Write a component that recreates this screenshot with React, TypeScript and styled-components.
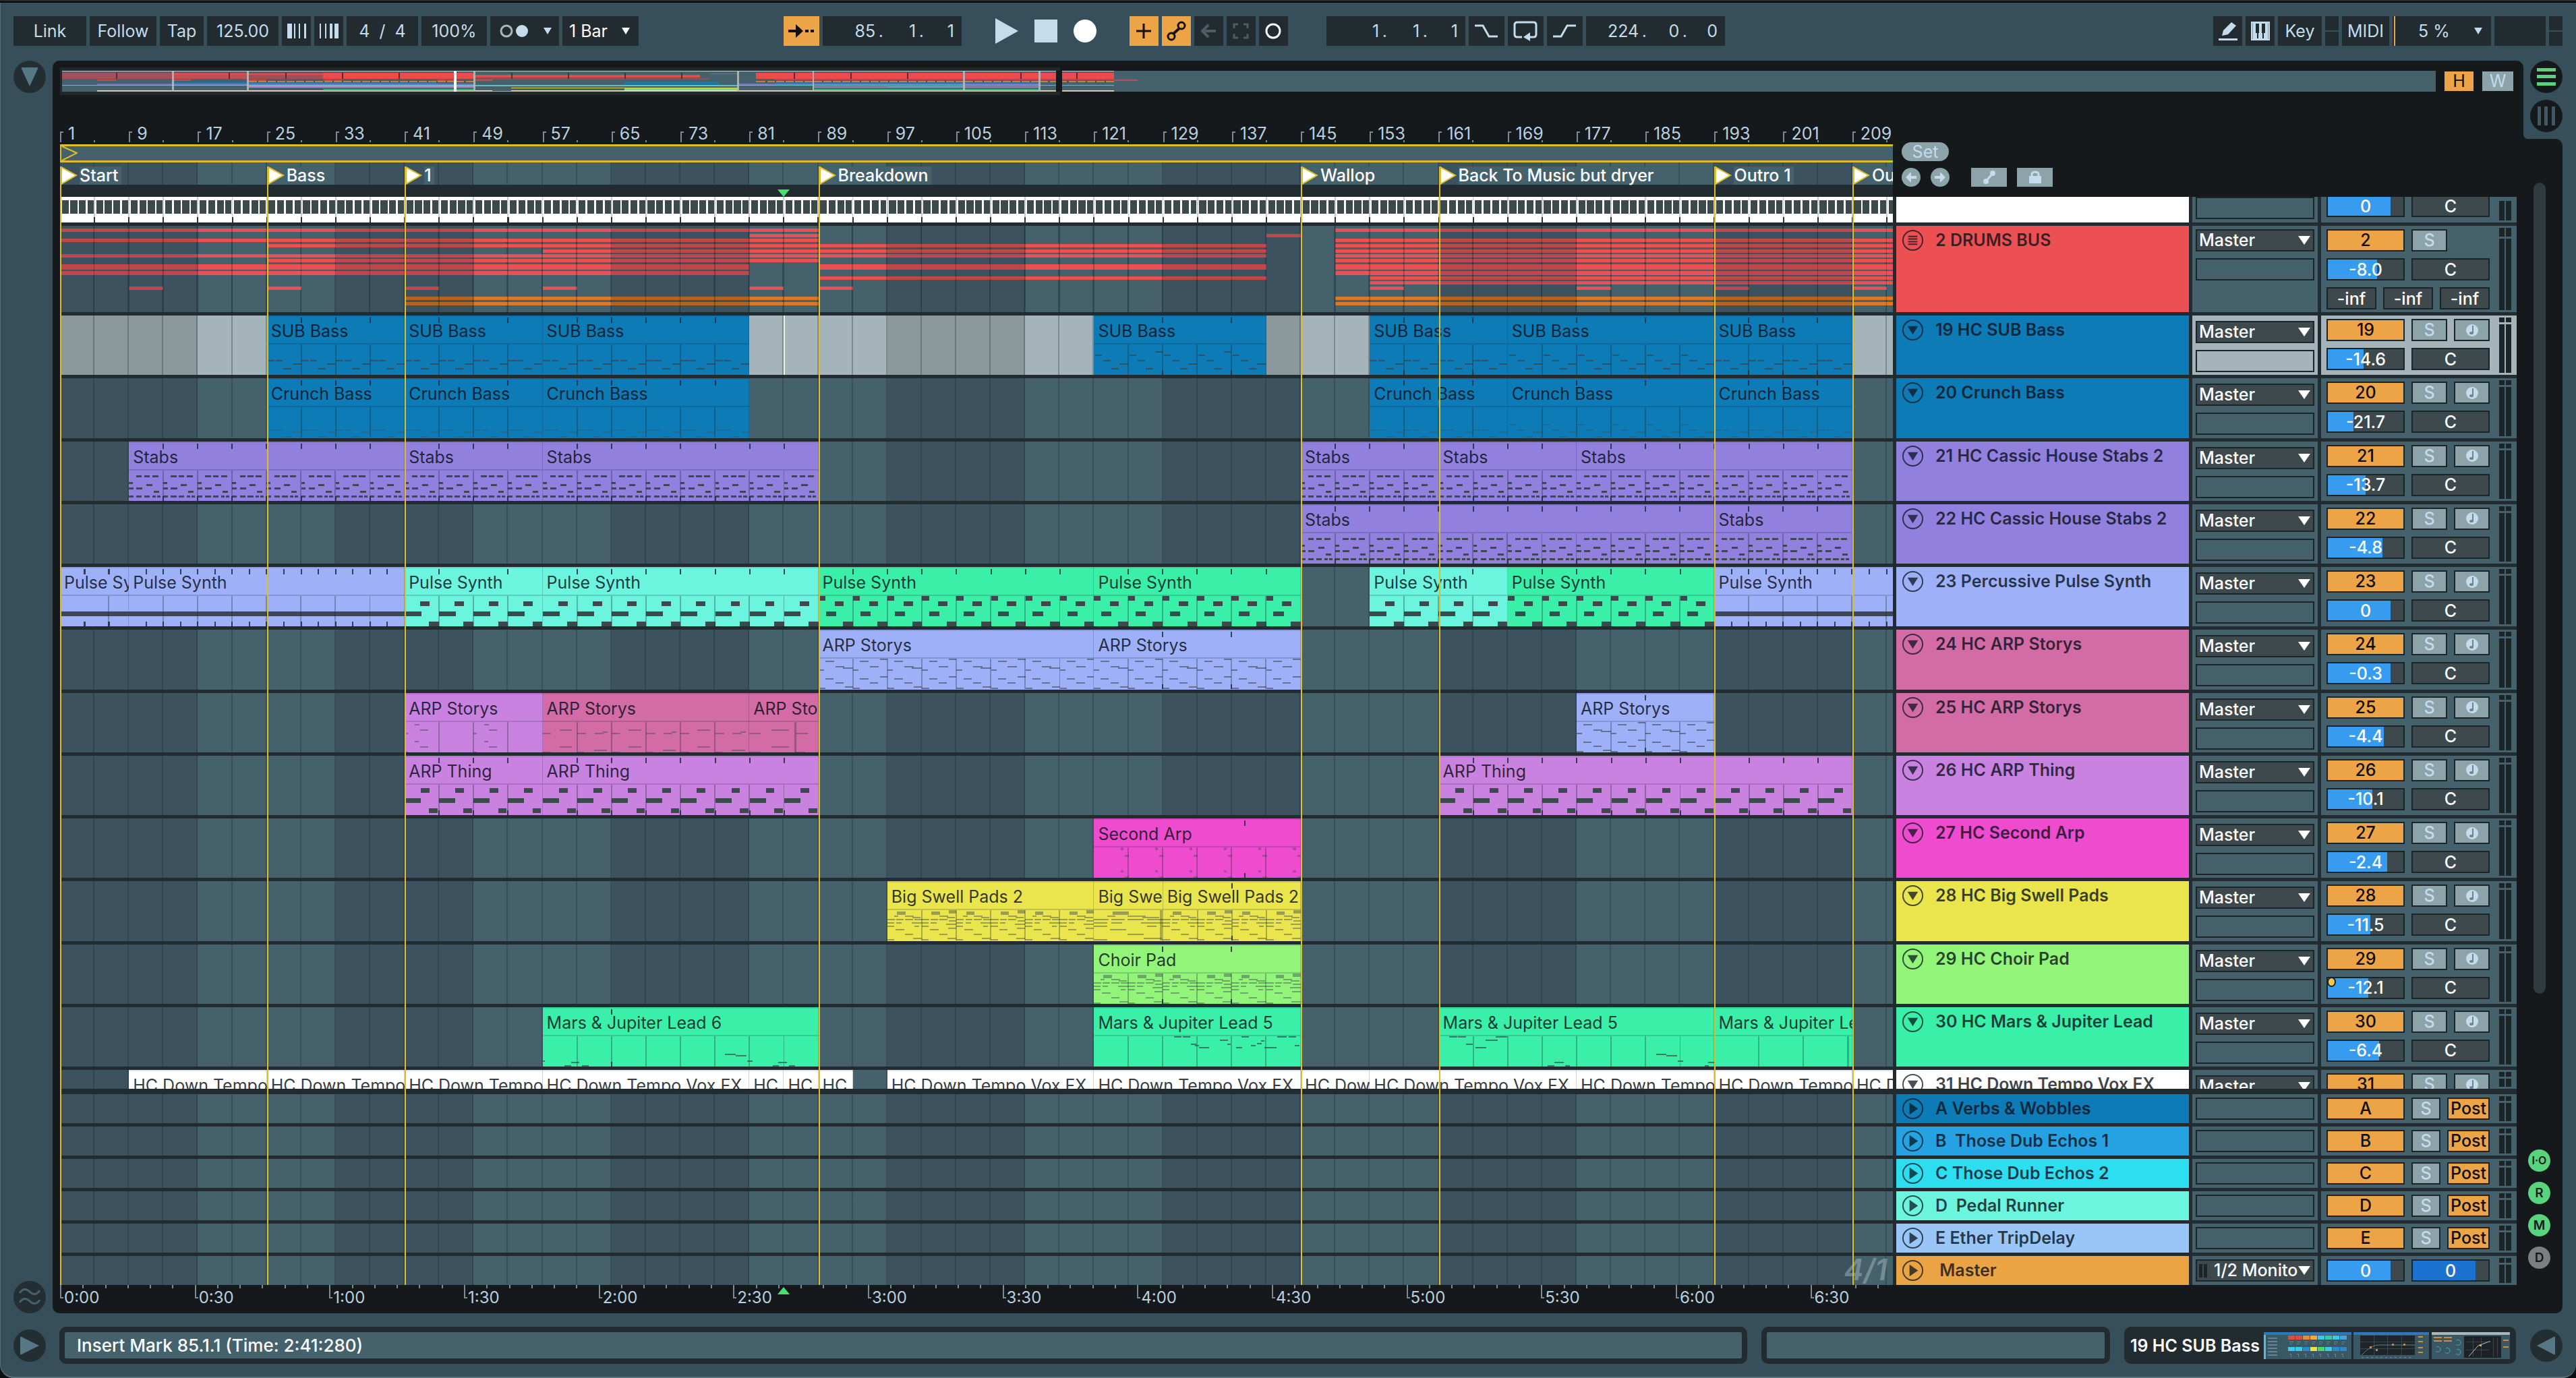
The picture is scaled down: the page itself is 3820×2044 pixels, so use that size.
import React from 'react';
import styled, { createGlobalStyle, css } from 'styled-components';

/* ------------------------------------------------------------------ */
/* Theme values                                                        */
/* ------------------------------------------------------------------ */

const c = {
  window: '#364f5b',
  field: '#222b2f',
  panel: '#15191b',
  divider: '#222b2f',
  surface: '#44616c',
  surfaceDark: '#3c535f',
  selected: '#a5b4bb',
  selectedDark: '#8b999d',
  text: '#c4dcec',
  white: '#ffffff',
  orange: '#eda447',
  blue: '#379cef',
  off: '#8ba3a9',
  control: '#3d494c',
  edge: '#1b2426',
  yellow: '#dcbd2e',
  note: '#3c4a4e',
  green: '#4ade72',
};

const hue = {
  blue: '#0d7bb6',
  purple: '#9280de',
  peri: '#9eb0f8',
  aqua: '#6bf5df',
  green: '#3af0a9',
  pink: '#d36ba6',
  violet: '#ca82e0',
  magenta: '#ee4bcf',
  yellow: '#eae44d',
  lime: '#92f57a',
  red: '#ec5052',
  white: '#ffffff',
};

const TOTAL = 212.7;
const pct = (bars: number) => `${(bars / TOTAL) * 100}%`;

const Global = createGlobalStyle`
  * { box-sizing: border-box; }
  body { margin: 0; background: #0d0f10; font-family: Inter, "Liberation Sans", sans-serif; font-size: 25px; }
  button, input, select { font: inherit; color: inherit; margin: 0; padding: 0; border: 0; border-radius: 0; outline: 0; background: none; min-width: 0; }
  button { cursor: pointer; }
`;

/* ------------------------------------------------------------------ */
/* Shell                                                               */
/* ------------------------------------------------------------------ */

const Window = styled.div`
  display: flex;
  flex-direction: column;
  height: 100vh;
  background: ${c.window};
  border-top: 2px solid #28292e;
  border-bottom: 2px solid #5c7079;
  border-radius: 0 0 20px 20px;
  box-shadow: inset 0 2px 0 #05070a, inset 1px 0 0 #566b75;
  overflow: hidden;
  color: ${c.text};
`;

const Toolbar = styled.header`
  display: flex;
  align-items: center;
  padding: 22px 20px;
`;

const Group = styled.div<{ $gap?: number; $before?: number; $grow?: boolean }>`
  display: flex;
  align-items: center;
  flex: ${p => (p.$grow ? '1' : 'none')};
  gap: ${p => p.$gap ?? 5}px;
  margin-left: ${p => p.$before ?? 0}px;
`;

const Spacer = styled.div<{ $grow: number }>`
  flex: ${p => p.$grow} 1 0;
`;

const ToolButton = styled.button<{ $w: number; $on?: boolean }>`
  display: flex;
  align-items: center;
  justify-content: center;
  width: ${p => p.$w}px;
  height: 44px;
  background: ${p => (p.$on ? c.orange : c.field)};
  color: ${p => (p.$on ? '#14110c' : c.text)};
`;

const ToolInput = styled.input<{ $w: number }>`
  width: ${p => p.$w}px;
  height: 44px;
  background: ${c.field};
  text-align: center;
`;

const PickWrap = styled.div<{ $w: number; $meter?: boolean }>`
  display: grid;
  align-items: center;
  width: ${p => p.$w}px;
  height: 44px;
  background: ${c.field};
  ${p => p.$meter && `box-shadow: inset 2px 0 0 ${c.field}, inset 4px 0 0 ${c.orange};`}
  > * { grid-area: 1 / 1; }
  > svg { justify-self: end; margin-right: 13px; pointer-events: none; }
`;

const PickSelect = styled.select<{ $pad: number; $white?: boolean }>`
  appearance: none;
  width: 100%;
  height: 44px;
  padding-left: ${p => p.$pad}px;
  color: ${p => (p.$white ? c.white : c.text)};
`;

const Position = styled.div`
  display: flex;
  justify-content: flex-end;
  width: 206px;
  height: 44px;
  padding-right: 11px;
  background: ${c.field};
`;

const PositionInput = styled.input<{ $last?: boolean }>`
  width: ${p => (p.$last ? 45 : 60)}px;
  text-align: right;
`;

const Transport = styled.button`
  display: flex;
  width: 34px;
  height: 44px;
  align-items: center;
  justify-content: center;
`;

const Leds = styled.div`
  display: grid;
  grid-template-rows: 21px 21px;
  gap: 2px;
  width: 20px;
  > span { background: ${c.field}; }
`;

const Body = styled.main`
  display: flex;
  flex: 1;
  min-height: 0;
  padding-right: 20px;
`;

const SideRail = styled.aside`
  display: flex;
  flex-direction: column;
  justify-content: space-between;
  width: 78px;
  padding-left: 20px;
`;

const Round = styled.button<{ $bg?: string }>`
  display: flex;
  flex: none;
  align-items: center;
  justify-content: center;
  width: 48px;
  height: 48px;
  border-radius: 50%;
  background: ${p => p.$bg ?? '#232e33'};
`;

const Panel = styled.section`
  display: flex;
  flex-direction: column;
  flex: 1;
  min-width: 0;
  padding: 10px 10px 0 11px;
  background: ${c.panel};
  border-radius: 10px 10px 0 10px;
`;

/* ------------------------------------------------------------------ */
/* Overview                                                            */
/* ------------------------------------------------------------------ */

const OverviewRow = styled.div`
  display: flex;
  align-items: center;
  height: 41px;
  padding-right: 5px;
`;

const OverviewFrame = styled.div`
  flex: 1;
  height: 41px;
  min-width: 0;
  padding: 5px 0 5px 3px;
  background: linear-gradient(90deg, #22292b 42.1%, transparent 42.1%);
  > svg { display: block; width: 100%; height: 31px; background: ${c.surface}; }
`;

const SizeButton = styled.button<{ $on?: boolean }>`
  width: ${p => (p.$on ? 43 : 46)}px;
  height: 29px;
  margin-left: 13px;
  background: ${p => (p.$on ? c.orange : c.off)};
  color: ${p => (p.$on ? '#14110c' : c.text)};
  line-height: 29px;
`;

/* ------------------------------------------------------------------ */
/* Arrangement grid                                                    */
/* ------------------------------------------------------------------ */

const columns = css`
  display: grid;
  grid-template-columns: minmax(0, 1fr) 434px 186px 290px;
  column-gap: 5px;
`;

const Arrangement = styled.div`
  ${columns}
  flex: 1;
  min-height: 0;
  grid-template-rows: 151px minmax(0, 1fr) 283px 42px;
`;

const Rulers = styled.div`
  grid-area: 1 / 1;
  display: flex;
  flex-direction: column;
  overflow: hidden;
  background: ${c.panel};
`;

const BarRuler = styled.div`
  display: flex;
  height: 73px;
`;

const BarCell = styled.div`
  display: flex;
  flex: none;
  align-items: flex-end;
  width: ${pct(8)};
  padding-left: 12px;
  line-height: 32px;
  color: #b9d0e0;
  background:
    linear-gradient(#7d8a90, #7d8a90) 0 calc(100% - 3px) / 2px 16px no-repeat,
    linear-gradient(#7d8a90, #7d8a90) 0 calc(100% - 17px) / 5px 2px no-repeat,
    linear-gradient(#7d8a90, #7d8a90) 50% calc(100% - 3px) / 2px 3px no-repeat;
`;

const LoopBar = styled.div`
  display: flex;
  height: 27px;
  background: ${c.surface};
  border: solid ${c.yellow};
  border-width: 3px 0 3px 2px;
`;

const bands = (dark: string, light: string) => css`
  background:
    repeating-linear-gradient(90deg, transparent 0 calc(${pct(4)} - 2px), rgba(20, 34, 42, 0.28) calc(${pct(4)} - 2px) ${pct(4)}),
    repeating-linear-gradient(90deg, ${dark} 0 ${pct(16)}, ${light} ${pct(16)} ${pct(32)});
`;

const MarkerStrip = styled.div`
  height: 33px;
  ${bands(c.surfaceDark, c.surface)}
`;

const ScrubStrip = styled.div`
  flex: 1;
  background: ${c.divider};
`;

const Overlay = styled.div<{ $rows: string }>`
  grid-column: 1;
  grid-row: ${p => p.$rows};
  position: relative;
  overflow: hidden;
  z-index: 2;
  pointer-events: none;
`;

const Locator = styled.div`
  position: absolute;
  top: 106px;
  bottom: 0;
  display: flex;
  align-items: flex-start;
  border-left: 2px solid ${c.yellow};
`;

const LocatorName = styled.span`
  margin-left: 3px;
  padding-right: 4px;
  font-weight: 500;
  line-height: 27px;
  white-space: nowrap;
  color: ${c.white};
  background: ${c.surface};
`;

const PlayMark = styled.svg<{ $top: number }>`
  position: absolute;
  top: ${p => p.$top}px;
  width: 18px;
  height: 11px;
  margin-left: -9px;
`;

const HeadControls = styled.div`
  grid-area: 1 / 2 / 2 / 5;
  display: flex;
  flex-direction: column;
  gap: 10px;
  padding: 70px 0 0 8px;
`;

const SetButton = styled.button`
  width: 70px;
  height: 28px;
  border-radius: 14px;
  background: ${c.off};
  line-height: 28px;
`;

const Dot = styled.button`
  display: flex;
  align-items: center;
  justify-content: center;
  width: 28px;
  height: 28px;
  border-radius: 50%;
  background: ${c.off};
`;

const Chip = styled.button`
  display: flex;
  align-items: center;
  justify-content: center;
  width: 53px;
  height: 28px;
  background: ${c.off};
`;

const Scroller = styled.div`
  grid-area: 2 / 1 / 3 / 5;
  display: grid;
  grid-template-rows: 38px 128px repeat(12, minmax(0, 1fr)) 28px;
  row-gap: 5px;
  min-height: 0;
  overflow: hidden;
  background: ${c.divider};
  border-bottom: 8px solid ${c.divider};
`;

const Returns = styled.div`
  grid-area: 3 / 1 / 4 / 5;
  display: grid;
  grid-template-rows: repeat(6, minmax(0, 1fr));
  row-gap: 5px;
  background: ${c.divider};
`;

const Row = styled.div`
  ${columns}
  min-height: 0;
  overflow: hidden;
`;

const Lane = styled.div<{ $selected?: boolean }>`
  position: relative;
  overflow: hidden;
  ${p => (p.$selected ? bands(c.selectedDark, c.selected) : bands(c.surfaceDark, c.surface))}
`;

const LaneDrawing = styled.svg`
  display: block;
  width: 100%;
  height: 100%;
`;

const ClipBox = styled.div<{ $color: string; $short?: boolean }>`
  position: absolute;
  top: 0;
  height: ${p => (p.$short ? '88px' : '100%')};
  overflow: hidden;
  display: grid;
  background: ${p => p.$color};
  box-shadow: inset -1px 0 0 rgba(20, 30, 50, 0.2), inset 0 2px 0 rgba(20, 30, 50, 0.12);
  > * { grid-area: 1 / 1; }
  > svg { width: 100%; height: 100%; }
`;

const ClipName = styled.span`
  align-self: start;
  padding: 7px 0 0 6px;
  line-height: 32px;
  white-space: nowrap;
  color: rgba(10, 16, 24, 0.84);
`;

const Cursor = styled.i`
  position: absolute;
  top: 0;
  bottom: 0;
  width: 2px;
  background: #e2f8e4;
`;

const Signature = styled.span`
  position: absolute;
  right: 8px;
  bottom: -2px;
  font-size: 44px;
  font-style: italic;
  font-weight: 600;
  line-height: 50px;
  color: rgba(190, 205, 212, 0.42);
`;

const TimeRuler = styled.div`
  grid-area: 4 / 1;
  display: flex;
  overflow: hidden;
  background: repeating-linear-gradient(90deg, #7d8a90 0 2px, transparent 2px ${pct(15.625 / 6)}) 0 0 / 100% 5px no-repeat;
`;

const TimeCell = styled.div`
  flex: none;
  width: ${pct(15.625)};
  padding-left: 6px;
  font-size: 24px;
  line-height: 38px;
  color: #b9d0e0;
  background:
    linear-gradient(#7d8a90, #7d8a90) 0 0 / 2px 20px no-repeat,
    linear-gradient(#7d8a90, #7d8a90) 0 18px / 5px 2px no-repeat;
`;

/* ------------------------------------------------------------------ */
/* Track header, routing and mixer cells                               */
/* ------------------------------------------------------------------ */

const Header = styled.div<{ $color: string }>`
  display: flex;
  align-items: flex-start;
  gap: 17px;
  padding: 5px 0 0 8px;
  overflow: hidden;
  background: ${p => p.$color};
`;

const Fold = styled.button`
  display: flex;
  flex: none;
  width: 33px;
  height: 33px;
  color: rgba(10, 22, 32, 0.75);
  > svg { width: 33px; height: 33px; }
`;

const TrackName = styled.span`
  font-weight: 600;
  line-height: 32px;
  white-space: pre;
  color: rgba(8, 16, 24, 0.78);
`;

const cell = css<{ $selected?: boolean }>`
  overflow: hidden;
  background: ${p => (p.$selected ? c.selected : c.surface)};
`;

type Kind = 'track' | 'group' | 'cut' | 'return';

const Routing = styled.div<{ $selected?: boolean; $kind: Kind }>`
  ${cell}
  display: flex;
  flex-direction: column;
  justify-content: ${p => (p.$kind === 'cut' ? 'flex-end' : 'flex-start')};
  gap: 10px;
  padding: ${p => (p.$kind === 'track' ? 8 : 5)}px 5px 5px;
`;

const SelectBox = styled.div<{ $blank?: boolean }>`
  display: grid;
  flex: none;
  align-items: center;
  height: 33px;
  border: 2px solid ${c.edge};
  background: ${p => (p.$blank ? 'transparent' : c.control)};
  > * { grid-area: 1 / 1; }
  > svg { justify-self: end; margin-right: 4px; pointer-events: none; }
`;

const InputMeter = styled.span`
  display: grid;
  grid-template-columns: 5px 5px;
  gap: 2px;
  height: 20px;
  margin-left: 3px;
  > i { background: ${c.edge}; }
`;

const RouteSelect = styled.select<{ $inset?: boolean }>`
  appearance: none;
  width: ${p => (p.$inset ? 150 : 172)}px;
  height: 29px;
  padding-left: ${p => (p.$inset ? 25 : 3)}px;
  font-weight: 500;
  line-height: 29px;
  color: ${c.white};
`;

const Mixer = styled.div<{ $selected?: boolean }>`
  ${cell}
  display: flex;
  gap: 14px;
  padding-left: 8px;
`;

const Controls = styled.div<{ $kind: Kind }>`
  display: flex;
  flex-direction: column;
  justify-content: ${p => (p.$kind === 'cut' ? 'flex-end' : 'flex-start')};
  gap: 10px;
  width: 242px;
  padding: 5px 0 ${p => (p.$kind === 'cut' ? 8 : 5)}px;
`;

const ControlRow = styled.div`
  display: flex;
  flex: none;
  gap: 10px;
  position: relative;
`;

const boxed = css`
  height: 33px;
  border: 2px solid ${c.edge};
  font-weight: 500;
  line-height: 29px;
  text-align: center;
`;

const Activator = styled.button`
  ${boxed}
  width: 116px;
  background: ${c.orange};
  color: #0f0d0a;
`;

const Toggle = styled.button<{ $w: number; $post?: boolean }>`
  ${boxed}
  display: flex;
  align-items: center;
  justify-content: center;
  overflow: hidden;
  width: ${p => p.$w}px;
  background: ${p => (p.$post ? c.orange : c.off)};
  color: ${p => (p.$post ? '#0f0d0a' : c.text)};
`;

const Level = styled.input<{ $fill: number; $deep?: boolean }>`
  ${boxed}
  width: 116px;
  color: ${c.white};
  background: linear-gradient(90deg, ${p => (p.$deep ? '#1b72cf' : c.blue)} ${p => p.$fill}%, ${c.control} ${p => p.$fill}%);
`;

const Pan = styled.input`
  ${boxed}
  width: 116px;
  color: ${c.white};
  background: ${c.control};
`;

const SendInput = styled.input`
  ${boxed}
  width: 74px;
  color: ${c.white};
  background: ${c.control};
`;

const AutomationDot = styled.i`
  position: absolute;
  left: 1px;
  top: 0;
  width: 13px;
  height: 15px;
  border-radius: 50%;
  border: 2px solid ${c.edge};
  background: #f2c744;
`;

const Meter = styled.div<{ $peak: number }>`
  display: grid;
  grid-template-columns: 8px 8px;
  grid-template-rows: ${p => p.$peak}px minmax(0, 1fr);
  gap: 3px 2px;
  padding: 3px 0;
  > i { background: ${c.edge}; }
`;

/* ------------------------------------------------------------------ */
/* Right rail                                                          */
/* ------------------------------------------------------------------ */

const RightRail = styled.aside`
  display: flex;
  flex-direction: column;
  width: 58px;
`;

const ViewSwitch = styled.div`
  display: flex;
  flex-direction: column;
  gap: 10px;
  height: 116px;
  padding-left: 10px;
  background: radial-gradient(circle at 8px 0, transparent 8px, ${c.panel} 9px) 0 100% / 8px 8px no-repeat;
`;

const RailLower = styled.div`
  display: flex;
  flex-direction: column;
  flex: 1;
  gap: 15px;
  padding: 65px 0 66px 7px;
  background: ${c.panel};
  border-radius: 0 10px 10px 0;
`;

const ScrollTrack = styled.div`
  flex: 1;
  padding: 0 0 216px 8px;
  &::before {
    content: '';
    display: block;
    width: 18px;
    height: 100%;
    border-radius: 9px;
    background: #2f3b3f;
  }
`;

const Badge = styled.button<{ $off?: boolean; $small?: boolean }>`
  width: 33px;
  height: 33px;
  border-radius: 50%;
  background: ${p => (p.$off ? '#7b7f81' : '#58d47c')};
  color: #121a1a;
  font-size: ${p => (p.$small ? 16 : 19)}px;
  font-weight: 600;
  line-height: 33px;
`;

/* ------------------------------------------------------------------ */
/* Status bar                                                          */
/* ------------------------------------------------------------------ */

const StatusBar = styled.footer`
  display: flex;
  align-items: center;
  gap: 21px;
  padding: 20px 20px 19px;
`;

const StatusField = styled.div<{ $w?: number }>`
  display: flex;
  align-items: center;
  ${p => (p.$w ? `width: ${p.$w}px;` : 'flex: 1;')}
  min-width: 0;
  height: 55px;
  padding-left: 18px;
  border: 8px solid ${c.field};
  border-radius: 10px;
  background: ${c.surface};
  font-size: 26px;
  font-weight: 500;
  color: ${c.white};
`;

const DeviceField = styled.div`
  display: flex;
  align-items: center;
  justify-content: space-between;
  width: 581px;
  height: 55px;
  padding: 0 9px;
  border-radius: 10px;
  background: ${c.field};
  font-weight: 600;
  color: ${c.white};
`;

/* ------------------------------------------------------------------ */
/* Icons                                                               */
/* ------------------------------------------------------------------ */

const Arrow = ({ w = 18, h = 12, fill = c.text }) => (
  <svg width={w} height={h} viewBox="0 0 18 12" preserveAspectRatio="none"><path d="M0 0H18L9 12Z" fill={fill} /></svg>
);

const FoldIcon = ({ kind }: { kind: 'down' | 'right' | 'group' }) => (
  <svg viewBox="0 0 34 34" fill="none" stroke="currentColor" strokeWidth="2">
    <circle cx="17" cy="17" r="15" />
    {kind === 'down' && <path d="M9 11H25L17 24Z" fill="currentColor" stroke="none" />}
    {kind === 'right' && <path d="M12 8V26L25 17Z" fill="currentColor" stroke="none" />}
    {kind === 'group' && <path d="M10 11H24M10 15H24M10 19H24M10 23H24" />}
  </svg>
);

const NoteIcon = () => (
  <svg width="20" height="20" viewBox="0 0 20 20">
    <circle cx="10" cy="10" r="9" fill={c.text} />
    <path d="M11 3V14" stroke="#6d8790" strokeWidth="2" />
    <ellipse cx="9" cy="14" rx="3" ry="2" fill="#6d8790" />
  </svg>
);

/* ------------------------------------------------------------------ */
/* Clip note patterns: [x, y, w, h] with x/w as a part of a 4-bar cell */
/* ------------------------------------------------------------------ */

type N = [number, number, number, number];
interface Pattern { even: N[]; odd?: N[]; opacity: number }

const patterns: Record<string, Pattern> = {
  bassA: { opacity: 0.85, even: [[0, 66, 0.22, 2], [0.25, 66, 0.2, 2], [0.75, 71, 0.25, 2], [0.47, 78, 0.23, 2]] },
  bassB: {
    opacity: 0.85,
    even: [[0.03, 58, 0.2, 2], [0.27, 66, 0.22, 2], [0.74, 71, 0.26, 2], [0.5, 78, 0.22, 2]],
  },
  bassC: {
    opacity: 0.85,
    even: [[0.03, 58, 0.2, 2], [0.27, 66, 0.22, 2], [0.74, 71, 0.26, 2], [0.5, 78, 0.22, 2]],
    odd: [[0.03, 58, 0.2, 2], [0.27, 66, 0.22, 2], [0.78, 53, 0.22, 2], [0.5, 78, 0.22, 2]],
  },
  crunchA: { opacity: 0.3, even: [[0, 76, 0.22, 2], [0.25, 76, 0.2, 2], [0.75, 79, 0.25, 2], [0.47, 86, 0.23, 2]] },
  crunchB: { opacity: 0.35, even: [[0.03, 68, 0.2, 2], [0.27, 76, 0.22, 2], [0.74, 79, 0.26, 2], [0.5, 86, 0.22, 2]] },
  stabs: {
    opacity: 1,
    even: [
      [0.22, 50, 0.16, 3], [0.45, 50, 0.16, 3], [0.68, 50, 0.18, 3],
      [0, 60, 0.11, 3], [0.5, 63, 0.18, 3],
      [0, 68, 0.13, 3], [0.22, 68, 0.18, 3],
      [0.72, 73, 0.16, 3],
      [0, 80, 0.13, 3], [0.22, 80, 0.16, 3], [0.45, 80, 0.16, 3], [0.68, 80, 0.1, 3], [0.82, 80, 0.1, 3],
    ],
  },
  pulse: { opacity: 1, even: [[0.45, 51, 0.27, 7], [0, 66, 0.48, 7], [0.71, 81, 0.29, 8]] },
  pulseHigh: { opacity: 1, even: [[0, 43, 0.2, 7], [0.46, 51, 0.27, 7], [0.21, 66, 0.3, 7], [0.71, 81, 0.29, 8]] },
  drone: { opacity: 1, even: [[0, 66, 1, 7]] },
  thing: { opacity: 1, even: [[0.47, 48, 0.25, 7], [0, 63, 0.47, 7], [0.71, 78, 0.25, 7]] },
  story: {
    opacity: 0.6,
    even: [
      [0.2, 46, 0.25, 2], [0.48, 54, 0.27, 2], [0.7, 56, 0.3, 2], [0, 59, 0.16, 2],
      [0.2, 72, 0.24, 2], [0.48, 78, 0.24, 2], [0.76, 84, 0.24, 2], [0, 86, 0.2, 2],
    ],
    odd: [
      [0.2, 46, 0.25, 2], [0.48, 54, 0.27, 2], [0.78, 43, 0.22, 2], [0, 59, 0.16, 2],
      [0.2, 72, 0.24, 2], [0.48, 78, 0.24, 2], [0.78, 69, 0.22, 2], [0, 86, 0.2, 2],
    ],
  },
  storyViolet: {
    opacity: 0.5,
    even: [[0.3, 46, 0.14, 2], [0.45, 54, 0.24, 2], [0, 59, 0.1, 2], [0.3, 71, 0.12, 2], [0.45, 79, 0.24, 2], [0, 87, 0.1, 2]],
    odd: [],
  },
  storyPink: {
    opacity: 0.45,
    even: [[0.48, 54, 0.37, 2], [0, 59, 0.24, 2], [0.48, 79, 0.37, 2], [0, 87, 0.24, 2]],
    odd: [[0, 59, 0.26, 2], [0.5, 59, 0.26, 2], [0.74, 57, 0.14, 2], [0.48, 84, 0.38, 2], [0, 87, 0.2, 2]],
  },
  second: { opacity: 0.4, even: [[0.78, 43, 0.08, 4], [0.9, 54, 0.12, 3], [0.78, 77, 0.08, 3], [0.9, 86, 0.12, 3]] },
  swell: {
    opacity: 0.45,
    even: [
      [0.28, 45, 0.24, 5], [0.2, 51, 0.12, 2], [0.5, 51, 0.26, 2], [0.72, 53, 0.24, 2],
      [0, 56, 0.22, 2], [0.26, 56, 0.2, 2], [0.5, 56, 0.24, 2], [0.78, 56, 0.22, 2],
      [0, 61, 0.2, 2], [0.26, 61, 0.16, 2], [0.7, 61, 0.3, 2], [0, 66, 0.2, 2], [0.78, 66, 0.14, 2],
      [0.24, 71, 0.24, 2], [0.5, 78, 0.24, 2], [0.74, 84, 0.26, 2], [0, 86, 0.2, 2],
    ],
    odd: [
      [0.28, 45, 0.24, 5], [0.78, 43, 0.22, 5], [0.5, 51, 0.26, 2], [0.72, 53, 0.24, 2],
      [0, 56, 0.22, 2], [0.26, 56, 0.2, 2], [0.5, 56, 0.24, 2], [0.78, 58, 0.22, 2],
      [0, 61, 0.2, 2], [0.26, 61, 0.16, 2], [0.7, 63, 0.3, 2], [0, 66, 0.2, 2], [0.76, 69, 0.24, 2],
      [0.24, 71, 0.24, 2], [0.5, 78, 0.24, 2], [0.74, 84, 0.26, 2], [0, 86, 0.2, 2],
    ],
  },
  none: { opacity: 0, even: [] },
};

interface Clip {
  from: number; to: number; name: string; color: string; pattern: string;
  ticks?: number[]; low?: boolean; extra?: N[];
}

const every = (from: number, to: number, step = 4) => {
  const out: number[] = [];
  for (let b = from + step; b < to; b += step) out.push(b);
  return out;
};

const clip = (from: number, to: number, name: string, color: string, pattern = 'none', more: Partial<Clip> = {}): Clip =>
  ({ from, to, name, color, pattern, ...more });

const LEAD_A: N[] = [
  [78.1, 69, 1.3, 2], [79.4, 71, 1.2, 2], [60.3, 81, 0.9, 2], [59.5, 86, 0.8, 2], [61.5, 86, 0.8, 2], [57, 79, 0.2, 2],
  [80.7, 79, 0.6, 2], [84.3, 81, 1, 2], [83.7, 86, 0.7, 2], [85.6, 86, 0.7, 2],
];
const LEAD_B: N[] = [
  [130.3, 43, 0.9, 2], [131.3, 43, 0.9, 2], [135.6, 48, 1, 2], [132.3, 54, 0.6, 2], [133.2, 59, 1.2, 2], [132.7, 56, 0.5, 2],
  [136.5, 54, 0.4, 2], [137.5, 59, 0.7, 2], [139.2, 56, 0.6, 2], [139.9, 53, 0.6, 2], [140.8, 59, 1.4, 2],
  [138.1, 43, 0.9, 2], [140.4, 49, 0.4, 2], [142.3, 43, 1.1, 2], [143.6, 43, 0.9, 2], [144.3, 56, 0.6, 2],
];
const LEAD_C: N[] = [
  [162.2, 43, 0.9, 2], [163.2, 43, 0.9, 2], [167.6, 43, 1.3, 2], [166.4, 48, 1.4, 2], [164.1, 54, 0.8, 2], [165.2, 59, 1.3, 2],
  [186.2, 69, 1.2, 2], [187.4, 71, 1.2, 2], [188.7, 79, 0.6, 2], [174.4, 81, 1.1, 2], [192.2, 81, 0.8, 2],
  [173.6, 86, 0.8, 2], [175.6, 86, 0.6, 2], [191.8, 86, 0.5, 2],
];
const LEAD_D: N[] = [[206.4, 81, 0.8, 2], [205.6, 86, 0.8, 2], [207.5, 86, 0.8, 2]];

interface Track {
  id: string; name: string; color: string; vol: string; fill: number; clips: Clip[]; selected?: boolean; automated?: boolean;
}

const VOX = 'HC Down Tempo Vox FX';

const tracks: Track[] = [
  {
    id: '19', name: '19 HC SUB Bass', color: hue.blue, vol: '-14.6', fill: 47, selected: true, clips: [
      clip(25, 41, 'SUB Bass', hue.blue, 'bassA'),
      clip(41, 57, 'SUB Bass', hue.blue, 'bassA', { ticks: [45, 53] }),
      clip(57, 81, 'SUB Bass', hue.blue, 'bassA'),
      clip(121, 141, 'SUB Bass', hue.blue, 'bassC', { ticks: [129, 137], low: true }),
      clip(153, 169, 'SUB Bass', hue.blue, 'bassA', { ticks: [157, 165], low: true }),
      clip(169, 193, 'SUB Bass', hue.blue, 'bassB', { ticks: [177, 185] }),
      clip(193, 209, 'SUB Bass', hue.blue, 'bassA', { low: true }),
    ],
  },
  {
    id: '20', name: '20 Crunch Bass', color: hue.blue, vol: '-21.7', fill: 34, clips: [
      clip(25, 41, 'Crunch Bass', hue.blue, 'crunchA'),
      clip(41, 57, 'Crunch Bass', hue.blue, 'crunchA', { ticks: [45, 53] }),
      clip(57, 81, 'Crunch Bass', hue.blue, 'crunchA'),
      clip(153, 169, 'Crunch Bass', hue.blue, 'crunchA', { ticks: [157, 165] }),
      clip(169, 193, 'Crunch Bass', hue.blue, 'crunchB', { ticks: [177, 185] }),
      clip(193, 209, 'Crunch Bass', hue.blue, 'crunchA'),
    ],
  },
  {
    id: '21', name: '21 HC Cassic House Stabs 2', color: hue.purple, vol: '-13.7', fill: 50, clips: [
      clip(9, 41, 'Stabs', hue.purple, 'stabs', { low: true }), clip(41, 57, 'Stabs', hue.purple, 'stabs', { low: true }),
      clip(57, 89, 'Stabs', hue.purple, 'stabs', { low: true }), clip(145, 161, 'Stabs', hue.purple, 'stabs', { low: true }),
      clip(161, 177, 'Stabs', hue.purple, 'stabs', { low: true }), clip(177, 209, 'Stabs', hue.purple, 'stabs', { low: true }),
    ],
  },
  {
    id: '22', name: '22 HC Cassic House Stabs 2', color: hue.purple, vol: '-4.8', fill: 72, clips: [
      clip(145, 193, 'Stabs', hue.purple, 'stabs', { low: true }), clip(193, 209, 'Stabs', hue.purple, 'stabs', { low: true }),
    ],
  },
  {
    id: '23', name: '23 Percussive Pulse Synth', color: hue.peri, vol: '0', fill: 83, clips: [
      clip(1, 9, 'Pulse Synth', hue.peri, 'drone', { ticks: every(1, 9, 2), low: true }),
      clip(9, 41, 'Pulse Synth', hue.peri, 'drone', { ticks: every(9, 41, 2), low: true }),
      clip(41, 57, 'Pulse Synth', hue.aqua, 'pulse', { ticks: [45, 53] }),
      clip(57, 89, 'Pulse Synth', hue.aqua, 'pulse'),
      clip(89, 121, 'Pulse Synth', hue.green, 'pulseHigh'),
      clip(121, 145, 'Pulse Synth', hue.green, 'pulseHigh'),
      clip(153, 169, 'Pulse Synth', hue.aqua, 'pulse', { ticks: [157, 165] }),
      clip(169, 193, 'Pulse Synth', hue.green, 'pulseHigh'),
      clip(193, 225, 'Pulse Synth', hue.peri, 'drone', { ticks: every(193, 225, 2), low: true }),
    ],
  },
  {
    id: '24', name: '24 HC ARP Storys', color: hue.pink, vol: '-0.3', fill: 83, clips: [
      clip(89, 121, 'ARP Storys', hue.peri, 'story', { ticks: [] }),
      clip(121, 145, 'ARP Storys', hue.peri, 'story', { ticks: [129, 137], low: true }),
    ],
  },
  {
    id: '25', name: '25 HC ARP Storys', color: hue.pink, vol: '-4.4', fill: 74, clips: [
      clip(41, 57, 'ARP Storys', hue.violet, 'storyViolet', { ticks: [] }),
      clip(57, 81, 'ARP Storys', hue.pink, 'storyPink', { ticks: [] }),
      clip(81, 89, 'ARP Storys', hue.pink, 'storyPink', { ticks: [] }),
      clip(177, 193, 'ARP Storys', hue.peri, 'story', { ticks: [185], low: true }),
    ],
  },
  {
    id: '26', name: '26 HC ARP Thing', color: hue.violet, vol: '-10.1', fill: 59, clips: [
      clip(41, 57, 'ARP Thing', hue.violet, 'thing', { low: true }),
      clip(57, 89, 'ARP Thing', hue.violet, 'thing', { low: true }),
      clip(161, 209, 'ARP Thing', hue.violet, 'thing', { low: true }),
    ],
  },
  {
    id: '27', name: '27 HC Second Arp', color: hue.magenta, vol: '-2.4', fill: 79, clips: [
      clip(121, 145, 'Second Arp', hue.magenta, 'second', { ticks: [138.5], low: true }),
    ],
  },
  {
    id: '28', name: '28 HC Big Swell Pads', color: hue.yellow, vol: '-11.5', fill: 56, clips: [
      clip(97, 121, 'Big Swell Pads 2', hue.yellow, 'swell', { ticks: [] }),
      clip(121, 129, 'Big Swell Pads 2', hue.yellow, 'swell', { ticks: [] }),
      clip(129, 145, 'Big Swell Pads 2', hue.yellow, 'swell', { ticks: [137], low: true }),
    ],
  },
  {
    id: '29', name: '29 HC Choir Pad', color: hue.lime, vol: '-12.1', fill: 54, automated: true, clips: [
      clip(121, 145, 'Choir Pad', hue.lime, 'swell', { ticks: [129, 137], low: true }),
    ],
  },
  {
    id: '30', name: '30 HC Mars & Jupiter Lead', color: hue.green, vol: '-6.4', fill: 68, clips: [
      clip(57, 89, 'Mars & Jupiter Lead 6', hue.green, 'none', { ticks: [65], low: true, extra: LEAD_A }),
      clip(121, 145, 'Mars & Jupiter Lead 5', hue.green, 'none', { ticks: [], extra: LEAD_B }),
      clip(161, 193, 'Mars & Jupiter Lead 5', hue.green, 'none', { ticks: [], extra: LEAD_C }),
      clip(193, 209, 'Mars & Jupiter Lead 5', hue.green, 'none', { ticks: [], extra: LEAD_D }),
    ],
  },
  {
    id: '31', name: '31 HC Down Tempo Vox FX', color: hue.white, vol: '-9.0', fill: 60,
    clips: [[9, 25], [25, 41], [41, 57], [57, 81], [81, 85], [85, 89], [89, 93], [97, 121], [121, 145], [145, 153], [153, 177], [177, 193], [193, 209], [209, 225]]
      .map(([a, b]) => clip(a, b, b - a === 4 ? 'HC' : VOX, hue.white, 'none', { ticks: a === 9 ? [24.4] : [] })),
  },
];

const returns = [
  { id: 'A', name: 'A Verbs & Wobbles', color: hue.blue },
  { id: 'B', name: 'B  Those Dub Echos 1', color: '#24a2e1' },
  { id: 'C', name: 'C Those Dub Echos 2', color: '#2cdeef' },
  { id: 'D', name: 'D  Pedal Runner', color: hue.aqua },
  { id: 'E', name: 'E Ether TripDelay', color: '#99c6f7' },
];

const locators: [number, string][] = [
  [1, 'Start'], [25, 'Bass'], [41, '1'], [89, 'Breakdown'], [145, 'Wallop'], [161, 'Back To Music but dryer'], [193, 'Outro 1'], [209, 'Outro 2'],
];

/* ------------------------------------------------------------------ */
/* Pieces                                                              */
/* ------------------------------------------------------------------ */

const ClipView = ({ data }: { data: Clip }) => {
  const { from, to } = data;
  const p = patterns[data.pattern];
  const cells: React.ReactNode[] = [];
  const white = data.color === hue.white;
  for (let b = from, i = 0; b < to; b += 4, i++) {
    const notes = i % 2 && p.odd ? p.odd : p.even;
    notes.forEach((n, k) => cells.push(
      <rect key={`${b}-${k}`} x={b + n[0] * 4} y={n[1]} width={n[2] * 4} height={n[3]} fill={c.note} opacity={p.opacity} />,
    ));
    if (i) cells.push(<rect key={`g${b}`} x={b - 0.1} y={43} width={0.14} height={45} fill="#142030" opacity={0.3} />);
  }
  const ticks = data.ticks ?? every(from, to);
  return (
    <ClipBox $color={data.color} $short={white} style={{ left: pct(from - 1), width: pct(to - from) }}>
      <svg viewBox={`${from} 0 ${to - from} 88`} preserveAspectRatio="none" shapeRendering="crispEdges">
        {!white && <rect x={from} y={41} width={to - from} height={2} fill="#142030" opacity={0.18} />}
        {cells}
        {data.extra?.map((n, i) => <rect key={i} x={n[0]} y={n[1]} width={n[2]} height={n[3]} fill={c.note} opacity={0.7} />)}
        {ticks.map(t => <rect key={t} x={t - 0.08} y={3} width={0.16} height={8} fill="#1c2c40" opacity={0.85} />)}
        {data.low && ticks.map(t => <rect key={t} x={t - 0.08} y={81} width={0.16} height={7} fill="#1c2c40" opacity={0.85} />)}
      </svg>
      <ClipName>{data.name}</ClipName>
    </ClipBox>
  );
};

type Strip = [number, number, [number, number][]];

const redRows: Strip[] = [
  [4, 5, [[1, 89], [149, 225]]],
  [12, 5, [[81, 89], [141, 145]]],
  [19, 5, [[1, 89], [149, 225]]],
  [27, 5, [[25, 141], [149, 225]]],
  [35, 5, [[57, 141], [149, 225]]],
  [42, 5, [[1, 141], [149, 225]]],
  [49, 5, [[25, 89], [149, 225]]],
  [57, 8, [[1, 81], [89, 141], [149, 225]]],
  [67, 6, [[1, 81], [149, 225]]],
  [75, 5, [[89, 141], [153, 225]]],
  [82, 5, [[153, 225]]],
  [90, 5, [[9, 13], [25, 29], [41, 45], [57, 61], [81, 85], [89, 93], [153, 157], [177, 181], [193, 197], [209, 213]]],
];
const orangeRows: Strip[] = [
  [105, 5, [[41, 89], [149, 225]]],
  [113, 5, [[41, 89], [149, 225]]],
];

const GroupDrawing = () => {
  const out: React.ReactNode[] = [];
  const draw = (rows: Strip[], light: string, dark: string) =>
    rows.forEach(([y, h, spans]) => spans.forEach(([a, b]) => {
      for (let s = a; s < b;) {
        const edge = Math.floor((s - 1) / 16) * 16 + 17;
        const e = Math.min(edge, b);
        const isDark = Math.floor((s - 1) / 16) % 2 === 0;
        out.push(<rect key={`${y}-${s}`} x={s - 1} y={y} width={e - s} height={h} fill={isDark ? dark : light} />);
        s = e;
      }
    }));
  draw(redRows, '#ec5052', '#c04649');
  draw(orangeRows, '#de7826', '#b5641f');
  for (let b = 4; b < TOTAL; b += 4) out.push(<rect key={`l${b}`} x={b - 0.1} y={0} width={0.13} height={128} fill="#14222a" opacity={0.3} />);
  return (
    <LaneDrawing viewBox={`0 0 ${TOTAL} 128`} preserveAspectRatio="none" shapeRendering="crispEdges">{out}</LaneDrawing>
  );
};

const KickDrawing = () => {
  const out: React.ReactNode[] = [];
  for (let b = 0; b < 213; b++) out.push(<rect key={b} x={b + 0.2} y={5} width={b % 4 === 3 ? 0.7 : 0.8} height={20} fill="#3d4a4c" />);
  for (let b = 4; b < 213; b += 4) {
    out.push(<rect key={`g${b}`} x={b - 0.08} y={0} width={0.14} height={30} fill="#c9cdce" />);
    out.push(<rect key={`t${b}`} x={b - 0.08} y={30} width={0.16} height={8} fill="#2b3538" />);
  }
  return (
    <LaneDrawing viewBox={`0 0 ${TOTAL} 38`} preserveAspectRatio="none" shapeRendering="crispEdges">
      <rect width={TOTAL} height={38} fill="#fff" />
      {out}
    </LaneDrawing>
  );
};

/* [from, to, y, height, colour, opacity] */
const mini: [number, number, number, number, string, number][] = [
  [1, 225, 0, 1, '#c3cccd', 1],
  [1, 25, 3, 9, '#c24c52', 0.75], [25, 41, 3, 9, '#d64c50', 0.85], [41, 57, 3, 9, '#b04c52', 0.85],
  [25, 89, 4, 2, '#e34a4c', 1], [57, 89, 3, 9, '#ec4a4c', 1], [89, 137, 6, 4, '#dd4c50', 1], [89, 139, 11, 2, '#a34c54', 0.8],
  [139, 145, 4, 1, '#dd4c50', 0.9], [149, 225, 3, 9, '#ec4a4c', 1], [225, 230, 13, 2, '#d84c50', 0.8],
  [9, 13, 13, 2, '#d84c50', 0.8], [25, 29, 13, 2, '#d84c50', 0.8], [41, 45, 13, 2, '#d84c50', 0.8], [57, 61, 13, 2, '#d84c50', 0.8],
  [81, 85, 13, 2, '#d84c50', 0.8], [89, 93, 13, 2, '#d84c50', 0.8], [153, 225, 12, 2, '#b04c56', 0.9],
  [41, 89, 15, 2, '#cf7a2c', 1], [149, 225, 15, 2, '#cf7a2c', 1],
  [25, 81, 17, 3, '#1c78ae', 1], [121, 141, 16, 4, '#1c78ae', 1], [153, 209, 17, 3, '#2a6fb0', 1],
  [9, 89, 19, 3, '#7a78c4', 0.85], [145, 209, 19, 3, '#7a78c4', 0.9],
  [1, 225, 21, 1, '#8fb4dc', 0.9], [41, 145, 21, 2, '#62c8c8', 0.9], [153, 193, 21, 1, '#50d0c0', 1],
  [41, 89, 23, 2, '#c07ad0', 1], [161, 209, 23, 2, '#b884d4', 0.9], [177, 193, 23, 1, '#8fa4e8', 1],
  [97, 145, 25, 1, '#d6d048', 1], [57, 89, 27, 1, '#40d89c', 1], [121, 145, 26, 3, '#6fe08c', 1], [161, 209, 27, 1, '#40d89c', 1],
  [9, 93, 29, 1, '#efe0c0', 1], [97, 225, 29, 1, '#efe0c0', 1], [9, 225, 30, 1, '#d8a060', 1],
];

const Overview = () => (
  <svg viewBox="0 0 504 31" preserveAspectRatio="none" shapeRendering="crispEdges">
    {mini.map(([a, b, y, h, f, o], i) => <rect key={i} x={a - 1.6} y={y} width={b - a} height={h} fill={f} opacity={o} />)}
    {every(1, 225, 12).map(b => <rect key={b} x={b - 1.6} y={3} width={0.3} height={9} fill="#5a2a34" />)}
    {every(1, 225, 2).filter(b => (b > 41 && b < 89) || b > 149).map(b => <rect key={`o${b}`} x={b - 1.6} y={14} width={0.3} height={3} fill="#5a5040" />)}
    {[25, 41, 89, 145, 161, 193, 209].map(b => <rect key={`m${b}`} x={b - 1.7} y={1} width={0.4} height={29} fill="#b4babb" opacity={0.9} />)}
    <rect x={83.2} y={0} width={0.5} height={31} fill="#fff" />
    <rect x={211} y={0} width={1.3} height={31} fill="#15191b" />
  </svg>
);

const RouteBox = ({ label, value, io }: { label: string; value?: string; io?: boolean }) => (
  <SelectBox $blank={!value}>
    {value && (
      <>
        {io && <InputMeter><i /><i /></InputMeter>}
        <RouteSelect aria-label={label} $inset={io}><option>{value}</option></RouteSelect>
        <Arrow w={18} h={13} fill="#fff" />
      </>
    )}
  </SelectBox>
);

const Meters = ({ peak = 7 }: { peak?: number }) => <Meter $peak={peak}><i /><i /><i /><i /></Meter>;

const TrackRow = ({ t }: { t: Track }) => (
  <Row>
    <Lane $selected={t.selected}>
      {t.clips.map(k => <ClipView key={k.from} data={k} />)}
      {t.selected && <Cursor style={{ left: pct(84) }} />}
    </Lane>
    <Header $color={t.color}>
      <Fold aria-label={`Fold ${t.name}`}><FoldIcon kind="down" /></Fold>
      <TrackName>{t.name}</TrackName>
    </Header>
    <Routing $selected={t.selected} $kind="track">
      <RouteBox label={`${t.name} output`} value="Master" />
      <RouteBox label={`${t.name} channel`} />
    </Routing>
    <Mixer $selected={t.selected}>
      <Controls $kind="track">
        <ControlRow>
          <Activator aria-pressed="true">{t.id}</Activator>
          <Toggle $w={53} aria-label={`Solo ${t.id}`}>S</Toggle>
          <Toggle $w={53} aria-label={`Arm ${t.id}`}><NoteIcon /></Toggle>
        </ControlRow>
        <ControlRow>
          <Level $fill={t.fill} aria-label={`${t.name} volume`} defaultValue={t.vol} />
          <Pan aria-label={`${t.name} pan`} defaultValue="C" />
          {t.automated && <AutomationDot />}
        </ControlRow>
      </Controls>
      <Meters />
    </Mixer>
  </Row>
);

const pads = ['#e8453c', '#e8453c', '#e88a3c', '#f0a848', '#3cc8e8', '#3cc8a8', '#3cc8e8', '#3ca8e8'];
const pads2 = ['#3cc8e8', '#3cc8e8', '#2a8ad0', '#f0e048', '#48d868', '#3cc8e8', '#2a8ad0', '#2a8ad0'];

const DevicePreview = () => (
  <svg width="365" height="40" viewBox="0 0 365 40" shapeRendering="crispEdges">
    <rect width="130" height="40" fill="#3a5766" /><rect width="130" height="4" fill="#2f76bd" />
    <rect x="0" y="4" width="3" height="36" fill="#5bb8d8" />
    {[8, 13, 18, 23, 28, 33].map(y => <rect key={y} x="6" y={y} width="14" height="2" fill="#8fb0bc" opacity="0.5" />)}
    {pads.map((f, i) => <rect key={i} x={36 + i * 11} y="5" width="10" height="6" fill={f} />)}
    {pads2.map((f, i) => <rect key={i} x={36 + i * 11} y="22" width="10" height="6" fill={f} />)}
    {pads.map((_, i) => <path key={i} d={`M${38 + i * 11} 14h6M${38 + i * 11} 17h4M${38 + i * 11} 32h2v5`} stroke="#a8c4cc" fill="none" opacity="0.4" />)}
    <rect x="133" width="112" height="40" fill="#3a5766" /><rect x="133" width="112" height="4" fill="#2f76bd" />
    <rect x="143" y="5" width="81" height="29" fill="#1f2629" />
    <path d="M143 14H224M143 24H224M163 5V34M183 5V34M204 5V34" stroke="#39474c" />
    <path d="M145 34Q160 18 172 19H224" stroke="#58808c" fill="none" shapeRendering="auto" />
    <rect x="157" y="21" width="3" height="3" fill="#c98f45" /><rect x="166" y="25" width="3" height="3" fill="#c98f45" />
    <rect x="190" y="17" width="3" height="3" fill="#c98f45" /><rect x="207" y="17" width="3" height="3" fill="#c98f45" />
    <path d="M145 37H222" stroke="#9cb4bc" strokeDasharray="3 4" opacity="0.6" />
    <path d="M229 7h7M229 14h7M229 23h7M229 30h7" stroke="#c98f45" strokeWidth="2" />
    <rect x="245" width="4" height="40" fill={c.field} />
    <rect x="249" width="116" height="40" fill="#3a5766" /><rect x="249" width="116" height="4" fill="#a9b8bd" />
    <path d="M252 8h12M267 8h12M252 13h12M267 13h12M355 12h8M355 22h8" stroke="#c98f45" strokeWidth="2" />
    <path d="M256 22a4 4 0 1 1-1 6M286 12a4 4 0 1 1-1 6M286 26a4 4 0 1 1-1 6M270 24a4 4 0 1 1-1 6" stroke="#4fa6b0" fill="none" shapeRendering="auto" />
    <rect x="297" y="6" width="55" height="32" fill="#1c2225" />
    <path d="M300 14H334M300 26H334M310 8V36M322 8V36M340 8V36M346 8V36" stroke="#3a474c" />
    <path d="M304 36L318 20 334 14H336" stroke="#b4c2c6" fill="none" shapeRendering="auto" />
    <rect x="320" y="18" width="3" height="3" fill="#eda447" />
  </svg>
);

const PositionField = ({ label, v }: { label: string; v: [string, string, string] }) => (
  <Position role="group" aria-label={label}>
    <PositionInput aria-label={`${label} bars`} defaultValue={`${v[0]}\u2009.`} />
    <PositionInput aria-label={`${label} beats`} defaultValue={`${v[1]}\u2009.`} />
    <PositionInput $last aria-label={`${label} sixteenths`} defaultValue={v[2]} />
  </Position>
);

const TopBar = () => (
  <Toolbar>
    <Group>
      <ToolButton $w={108}>Link</ToolButton>
      <ToolButton $w={99}>Follow</ToolButton>
      <ToolButton $w={65}>Tap</ToolButton>
      <ToolInput $w={106} aria-label="Tempo" defaultValue="125.00" />
      <ToolButton $w={43} aria-label="Nudge down">
        <svg width="30" height="22" viewBox="0 0 30 22" fill={c.text}><path d="M1 0H8V22H1ZM11 0H13V22H11ZM18 0H20V22H18ZM26 0H29V22H26Z" /></svg>
      </ToolButton>
      <ToolButton $w={43} aria-label="Nudge up">
        <svg width="30" height="22" viewBox="0 0 30 22" fill={c.text}><path d="M1 0H3V22H1ZM9 0H11V22H9ZM16 0H20V22H16ZM23 0H29V22H23Z" /></svg>
      </ToolButton>
      <ToolInput $w={106} aria-label="Time signature" defaultValue="4  /  4" />
      <ToolInput $w={97} aria-label="Groove amount" defaultValue="100%" />
      <ToolButton $w={102} aria-label="Metronome">
        <svg width="80" height="22" viewBox="0 0 80 22">
          <circle cx="13" cy="11" r="8" fill="none" stroke="#a9b6bd" strokeWidth="3" />
          <circle cx="36" cy="11" r="9" fill={c.text} />
          <path d="M68 6H80L74 16Z" fill={c.text} />
        </svg>
      </ToolButton>
      <PickWrap $w={113}>
        <PickSelect $pad={10} $white aria-label="Quantization"><option>1 Bar</option></PickSelect>
        <Arrow w={12} h={10} fill="#fff" />
      </PickWrap>
    </Group>
    <Spacer $grow={214} />
    <Group>
      <ToolButton $w={53} $on aria-label="Follow arrangement">
        <svg width="40" height="22" viewBox="0 0 40 22" fill="#14110c"><path d="M1 9H12V1L23 11 12 21V13H1ZM26 9H31V13H26ZM34 9H39V13H34Z" /></svg>
      </ToolButton>
      <PositionField label="Arrangement position" v={['85', '1', '1']} />
    </Group>
    <Group $gap={24} $before={50}>
      <Transport aria-label="Play"><svg width="34" height="38" viewBox="0 0 34 38"><path d="M0 0L34 19 0 38Z" fill={c.text} /></svg></Transport>
      <Transport aria-label="Stop"><svg width="34" height="34"><rect width="34" height="34" fill={c.text} /></svg></Transport>
      <Transport aria-label="Record"><svg width="34" height="34"><circle cx="17" cy="17" r="17" fill="#fff" /></svg></Transport>
    </Group>
    <Group $before={49}>
      <ToolButton $w={43} $on aria-label="Overdub">
        <svg width="24" height="24" viewBox="0 0 24 24" stroke="#14110c" strokeWidth="3"><path d="M12 1V23M1 12H23" /></svg>
      </ToolButton>
      <ToolButton $w={43} $on aria-label="Automation arm">
        <svg width="30" height="30" viewBox="0 0 30 30" fill="none" stroke="#14110c" strokeWidth="3"><circle cx="23" cy="7" r="5" /><circle cx="8" cy="23" r="5" /><path d="M20 11L11 19" strokeWidth="4" /></svg>
      </ToolButton>
      <ToolButton $w={43} aria-label="Re-enable automation">
        <svg width="24" height="22" viewBox="0 0 24 22" fill="none" stroke="#4d5d63" strokeWidth="4"><path d="M23 11H4M12 2L3 11 12 20" /></svg>
      </ToolButton>
      <ToolButton $w={43} aria-label="Capture">
        <svg width="24" height="24" viewBox="0 0 24 24" fill="none" stroke="#4d5d63" strokeWidth="3"><path d="M2 8V2H8M16 2H22V8M22 16V22H16M8 22H2V16" /></svg>
      </ToolButton>
      <ToolButton $w={43} aria-label="Session record">
        <svg width="24" height="24" viewBox="0 0 24 24"><circle cx="12" cy="12" r="10" fill="none" stroke="#fff" strokeWidth="3" /></svg>
      </ToolButton>
    </Group>
    <Group $before={57}>
      <PositionField label="Loop start" v={['1', '1', '1']} />
      <ToolButton $w={53} aria-label="Punch in">
        <svg width="36" height="22" viewBox="0 0 36 22" fill="none" stroke={c.text} strokeWidth="3"><path d="M1 3H13L22 19H35" /></svg>
      </ToolButton>
      <ToolButton $w={53} aria-label="Loop">
        <svg width="36" height="30" viewBox="0 0 36 30" fill="none" stroke={c.text} strokeWidth="3"><path d="M13 24H6Q2 24 2 20V6Q2 2 6 2H30Q34 2 34 6V20Q34 24 30 24H25" /><path d="M25 17V30L15 24Z" fill={c.text} stroke="none" /></svg>
      </ToolButton>
      <ToolButton $w={53} aria-label="Punch out">
        <svg width="36" height="22" viewBox="0 0 36 22" fill="none" stroke={c.text} strokeWidth="3"><path d="M1 19H13L22 3H35" /></svg>
      </ToolButton>
      <PositionField label="Loop length" v={['224', '0', '0']} />
    </Group>
    <Spacer $grow={721} />
    <Group>
      <ToolButton $w={43} aria-label="Draw mode">
        <svg width="30" height="28" viewBox="0 0 30 28" fill={c.text}><path d="M1 25H29V28H1ZM6 21L8 13 20 1 27 6 15 19Z" /></svg>
      </ToolButton>
      <ToolButton $w={43} aria-label="Computer MIDI keyboard">
        <svg width="28" height="28" viewBox="0 0 28 28"><rect width="28" height="28" fill={c.text} /><path d="M7 3H12V17H11V25H9V17H7ZM16 3H21V17H19V25H17V17H16Z" fill={c.field} /><path d="M2 2H3V26H2ZM25 2H26V26H25Z" fill={c.field} opacity="0.4" /></svg>
      </ToolButton>
      <ToolButton $w={65}>Key</ToolButton>
      <Leds><span /><span /></Leds>
      <ToolButton $w={70}>MIDI</ToolButton>
      <PickWrap $w={146} $meter>
        <PickSelect $pad={38} aria-label="CPU load"><option>5 %</option></PickSelect>
        <Arrow w={12} h={10} />
      </PickWrap>
      <ToolButton $w={76} aria-label="Overload" />
      <Leds><span /><span /></Leds>
    </Group>
  </Toolbar>
);

export default function App() {
  const barNumbers = Array.from({ length: 27 }, (_, i) => 1 + i * 8);
  const times = Array.from({ length: 14 }, (_, i) => `${Math.floor(i / 2)}:${i % 2 ? '30' : '00'}`);
  return (
    <>
      <Global />
      <Window>
        <TopBar />
        <Body>
          <SideRail>
            <Round aria-label="Show browser"><svg width="28" height="28" viewBox="0 0 28 28"><path d="M2 2Q1 0 3 0H25Q27 0 26 2L14 28Z" fill="#567884" /></svg></Round>
            <Round aria-label="Groove pool"><svg width="32" height="28" viewBox="0 0 32 28" fill="none" stroke="#46616c" strokeWidth="3"><path d="M1 8Q8 -2 16 6T31 4M1 22Q8 12 16 20T31 18" /></svg></Round>
          </SideRail>
          <Panel>
            <OverviewRow>
              <OverviewFrame><Overview /></OverviewFrame>
              <SizeButton $on>H</SizeButton>
              <SizeButton>W</SizeButton>
            </OverviewRow>
            <Arrangement>
              <Rulers>
                <BarRuler>{barNumbers.map(n => <BarCell key={n}>{n}</BarCell>)}</BarRuler>
                <LoopBar>
                  <svg width="24" height="21" viewBox="0 0 24 21"><path d="M1 0L23 10 1 21" fill="none" stroke={c.yellow} strokeWidth="2" /></svg>
                </LoopBar>
                <MarkerStrip />
                <ScrubStrip />
              </Rulers>
              <Overlay $rows="1 / 4">
                {locators.map(([bar, name]) => (
                  <Locator key={bar} style={{ left: pct(bar - 1) }}>
                    <svg width="24" height="27" viewBox="0 0 24 27"><path d="M0 1L22 13 0 26Z" fill="#fff" stroke={c.yellow} strokeWidth="2" /></svg>
                    <LocatorName>{name}</LocatorName>
                  </Locator>
                ))}
                <PlayMark $top={140} viewBox="0 0 18 11" style={{ left: pct(84) }}><path d="M0 0H18L9 11Z" fill={c.green} /></PlayMark>
              </Overlay>
              <HeadControls>
                <SetButton>Set</SetButton>
                <Group $gap={15}>
                  <Dot aria-label="Previous locator"><svg width="18" height="16" viewBox="0 0 18 16"><path d="M1 8L9 0V6H17V10H9V16Z" fill={c.text} /></svg></Dot>
                  <Dot aria-label="Next locator"><svg width="18" height="16" viewBox="0 0 18 16"><path d="M17 8L9 0V6H1V10H9V16Z" fill={c.text} /></svg></Dot>
                  <Group $gap={15} $before={17}>
                    <Chip aria-label="Automation mode"><svg width="20" height="20" viewBox="0 0 20 20"><path d="M5 16L15 4" stroke={c.text} strokeWidth="3" /><circle cx="5" cy="16" r="4" fill={c.text} /><circle cx="15" cy="4" r="4" fill={c.text} /></svg></Chip>
                    <Chip aria-label="Lock envelopes"><svg width="20" height="20" viewBox="0 0 20 20"><rect x="1" y="8" width="18" height="11" fill={c.text} /><path d="M5 9V6Q5 2 10 2T15 6V9" fill="none" stroke={c.text} strokeWidth="3" /></svg></Chip>
                  </Group>
                </Group>
              </HeadControls>
              <Scroller>
                <Row>
                  <Lane><KickDrawing /></Lane>
                  <Header $color="#ffffff" />
                  <Routing $kind="cut"><RouteBox label="Kick channel" /></Routing>
                  <Mixer>
                    <Controls $kind="cut">
                      <ControlRow>
                        <Level $fill={83} aria-label="Kick volume" defaultValue="0" />
                        <Pan aria-label="Kick pan" defaultValue="C" />
                      </ControlRow>
                    </Controls>
                    <Meters peak={0} />
                  </Mixer>
                </Row>
                <Row>
                  <Lane><GroupDrawing /></Lane>
                  <Header $color={hue.red}>
                    <Fold aria-label="Unfold 2 DRUMS BUS"><FoldIcon kind="group" /></Fold>
                    <TrackName>2 DRUMS BUS</TrackName>
                  </Header>
                  <Routing $kind="group">
                    <RouteBox label="Drums bus output" value="Master" />
                    <RouteBox label="Drums bus channel" />
                  </Routing>
                  <Mixer>
                    <Controls $kind="group">
                      <ControlRow><Activator aria-pressed="true">2</Activator><Toggle $w={53}>S</Toggle></ControlRow>
                      <ControlRow>
                        <Level $fill={65} aria-label="Drums bus volume" defaultValue="-8.0" />
                        <Pan aria-label="Drums bus pan" defaultValue="C" />
                      </ControlRow>
                      <ControlRow>
                        <SendInput aria-label="Send A" defaultValue="-inf" />
                        <SendInput aria-label="Send B" defaultValue="-inf" />
                        <SendInput aria-label="Send C" defaultValue="-inf" />
                      </ControlRow>
                    </Controls>
                    <Meters peak={13} />
                  </Mixer>
                </Row>
                {tracks.map(t => <TrackRow key={t.id} t={t} />)}
              </Scroller>
              <Returns>
                {returns.map(r => (
                  <Row key={r.id}>
                    <Lane />
                    <Header $color={r.color}>
                      <Fold aria-label={`Unfold ${r.name}`}><FoldIcon kind="right" /></Fold>
                      <TrackName>{r.name}</TrackName>
                    </Header>
                    <Routing $kind="return"><RouteBox label={`${r.name} output`} /></Routing>
                    <Mixer>
                      <Controls $kind="return">
                        <ControlRow>
                          <Activator aria-pressed="true">{r.id}</Activator>
                          <Toggle $w={43}>S</Toggle>
                          <Toggle $w={63} $post>Post</Toggle>
                        </ControlRow>
                      </Controls>
                      <Meters />
                    </Mixer>
                  </Row>
                ))}
                <Row>
                  <Lane><Signature>4/1</Signature></Lane>
                  <Header $color="#eba443">
                    <Fold aria-label="Unfold Master"><FoldIcon kind="right" /></Fold>
                    <TrackName> Master</TrackName>
                  </Header>
                  <Routing $kind="return"><RouteBox label="Master output" value="1/2 Monitors" io /></Routing>
                  <Mixer>
                    <Controls $kind="return">
                      <ControlRow>
                        <Level $fill={83} aria-label="Master volume" defaultValue="0" />
                        <Level $fill={83} $deep aria-label="Cue volume" defaultValue="0" />
                      </ControlRow>
                    </Controls>
                    <Meters />
                  </Mixer>
                </Row>
              </Returns>
              <TimeRuler>{times.map(t => <TimeCell key={t}>{t}</TimeCell>)}</TimeRuler>
              <Overlay $rows="4">
                <PlayMark $top={3} viewBox="0 0 18 11" style={{ left: pct(84) }}><path d="M0 11H18L9 0Z" fill={c.green} /></PlayMark>
              </Overlay>
            </Arrangement>
          </Panel>
          <RightRail>
            <ViewSwitch>
              <Round $bg="#15191b" aria-label="Arrangement view"><svg width="28" height="26" viewBox="0 0 28 26"><path d="M0 0H28V5H0ZM0 10H28V15H0ZM0 21H28V26H0Z" fill="#58d47c" /></svg></Round>
              <Round $bg="#15191b" aria-label="Session view"><svg width="26" height="28" viewBox="0 0 26 28"><path d="M0 0H5V28H0ZM10 0H15V28H10ZM21 0H26V28H21Z" fill="#3f5a66" /></svg></Round>
            </ViewSwitch>
            <RailLower>
              <ScrollTrack />
              <Badge $small>I·O</Badge>
              <Badge>R</Badge>
              <Badge>M</Badge>
              <Badge $off>D</Badge>
            </RailLower>
          </RightRail>
        </Body>
        <StatusBar>
          <Group $gap={20} $grow>
            <Round aria-label="Show info"><svg width="28" height="28" viewBox="0 0 28 28"><path d="M0 2Q0 0 2 1L28 14 2 27Q0 28 0 26Z" fill="#567884" /></svg></Round>
            <StatusField>Insert Mark 85.1.1 (Time: 2:41:280)</StatusField>
          </Group>
          <StatusField $w={517} />
          <DeviceField>
            <span>19 HC SUB Bass</span>
            <DevicePreview />
          </DeviceField>
          <Round aria-label="Hide devices"><svg width="28" height="28" viewBox="0 0 28 28"><path d="M27 2Q27 0 25 1L0 14 25 27Q27 28 27 26Z" fill="#567884" /></svg></Round>
        </StatusBar>
      </Window>
    </>
  );
}
